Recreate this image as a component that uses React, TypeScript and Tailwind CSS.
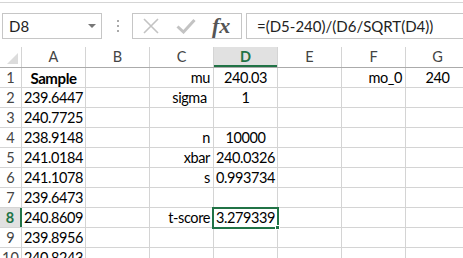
import React from 'react';

const cols = ['A', 'B', 'C', 'D', 'E', 'F', 'G'];

type Cell = { v: string; align?: 'c' | 'r'; bold?: boolean };

const rows: Record<number, Record<string, Cell>> = {
  1: {
    A: { v: 'Sample', align: 'c', bold: true },
    C: { v: 'mu', align: 'r' },
    D: { v: '240.03', align: 'c' },
    F: { v: 'mo_0', align: 'r' },
    G: { v: '240', align: 'c' },
  },
  2: { A: { v: '239.6447', align: 'c' }, C: { v: 'sigma ', align: 'r' }, D: { v: '1', align: 'c' } },
  3: { A: { v: '240.7725', align: 'c' } },
  4: { A: { v: '238.9148', align: 'c' }, C: { v: 'n', align: 'r' }, D: { v: '10000', align: 'c' } },
  5: { A: { v: '241.0184', align: 'c' }, C: { v: 'xbar', align: 'r' }, D: { v: '240.0326', align: 'c' } },
  6: { A: { v: '241.1078', align: 'c' }, C: { v: 's', align: 'r' }, D: { v: '0.993734', align: 'c' } },
  7: { A: { v: '239.6473', align: 'c' } },
  8: { A: { v: '240.8609', align: 'c' }, C: { v: 't-score', align: 'r' }, D: { v: '3.279339', align: 'c' } },
  9: { A: { v: '239.8956', align: 'c' } },
  10: { A: { v: '240.8243', align: 'c' } },
};

function FormulaBar() {
  return (
    <div className="h-[47px] pt-[2px]">
      <div className="flex h-full items-start border-t border-[#d5d5d5] bg-white">
        <div className="ml-[2px] mt-[10px] flex h-[26px] w-[100px] items-center justify-between border border-[#c6c6c6] pl-[6px] pr-[5px] text-[15px] text-[#222]">
          <span>D8</span>
          <span className="h-0 w-0 border-x-[4px] border-t-[4px] border-x-transparent border-t-[#777]" />
        </div>
        <div className="ml-[15px] mt-[17px] flex flex-col gap-[3px]">
          <span className="h-[2px] w-[2px] bg-[#aaa]" />
          <span className="h-[2px] w-[2px] bg-[#aaa]" />
          <span className="h-[2px] w-[2px] bg-[#aaa]" />
        </div>
        <div className="ml-[13px] mt-[10px] flex h-[26px] w-[110px] items-center border border-[#c6c6c6]">
          <svg width="18" height="16" viewBox="0 0 18 16" className="ml-[9px]">
            <path d="M2 1 L16 15 M16 1 L2 15" stroke="#c3c3c3" strokeWidth="1.6" fill="none" />
          </svg>
          <svg width="20" height="16" viewBox="0 0 20 16" className="ml-[16px]">
            <path d="M1.5 8.5 L7.5 14 L18.5 2" stroke="#c3c3c3" strokeWidth="3" fill="none" />
          </svg>
          <span className="ml-[16px] font-['Liberation_Serif',serif] text-[22px] font-bold italic leading-none text-[#555]">
            fx
          </span>
        </div>
        <div className="ml-[4px] mt-[10px] flex h-[26px] flex-1 items-center border-y border-l border-[#c6c6c6] pl-[10px] text-[15px] text-[#222]">
          =(D5-240)/(D6/SQRT(D4))
        </div>
      </div>
    </div>
  );
}

function Grid() {
  return (
    <div className="relative">
      <div className="flex h-[21px] border-b border-[#ababab]">
        <div className="relative w-[22px] shrink-0 border-r border-[#d4d4d4]">
          <span className="absolute bottom-[3px] right-[3px] h-0 w-0 border-b-[11px] border-l-[11px] border-b-[#dcdcdc] border-l-transparent" />
        </div>
        {cols.map((c) =>
          c === 'D' ? (
            <div
              key={c}
              className="flex w-[64px] shrink-0 items-center justify-center border-r border-[#d4d4d4] bg-[#e1e1e1] text-[14.5px] font-bold text-[#217346] shadow-[inset_0_-2px_0_#217346]"
            >
              {c}
            </div>
          ) : (
            <div
              key={c}
              className="flex w-[64px] shrink-0 items-center justify-center border-r border-[#d4d4d4] text-[14.5px] text-[#444]"
            >
              {c}
            </div>
          ),
        )}
      </div>
      {Array.from({ length: 10 }, (_, i) => i + 1).map((r) => (
        <div key={r} className="flex h-[20px] border-b border-[#d4d4d4]">
          {r === 8 ? (
            <div className="flex w-[22px] shrink-0 items-center justify-center border-r-2 border-[#217346] bg-[#e1e1e1] pt-[1px] text-[14.5px] font-bold text-[#217346]">
              {r}
            </div>
          ) : (
            <div className="flex w-[22px] shrink-0 items-center justify-center border-r border-[#d4d4d4] pt-[1px] text-[14.5px] text-[#444]">
              {r}
            </div>
          )}
          {cols.map((c) => {
            const cell = rows[r]?.[c];
            return (
              <div
                key={c}
                className={`flex w-[64px] shrink-0 items-center overflow-hidden whitespace-pre border-r border-[#d4d4d4] pt-[1px] text-[14.5px] tracking-[-0.4px] text-black ${
                  cell?.align === 'r' ? 'justify-end pr-[3px]' : 'justify-center'
                } ${cell?.bold ? 'font-bold text-[15px]' : ''}`}
              >
                {cell?.v}
              </div>
            );
          })}
        </div>
      ))}
      <div className="absolute left-[212px] top-[160px] h-[22px] w-[67px] border-2 border-[#217346]" />
      <div className="absolute left-[275px] top-[178px] h-[5px] w-[5px] border border-white bg-[#217346]" />
    </div>
  );
}

export default function App() {
  return (
    <div className="h-[258px] w-[463px] overflow-hidden bg-white font-['Lato',sans-serif]">
      <FormulaBar />
      <Grid />
    </div>
  );
}
